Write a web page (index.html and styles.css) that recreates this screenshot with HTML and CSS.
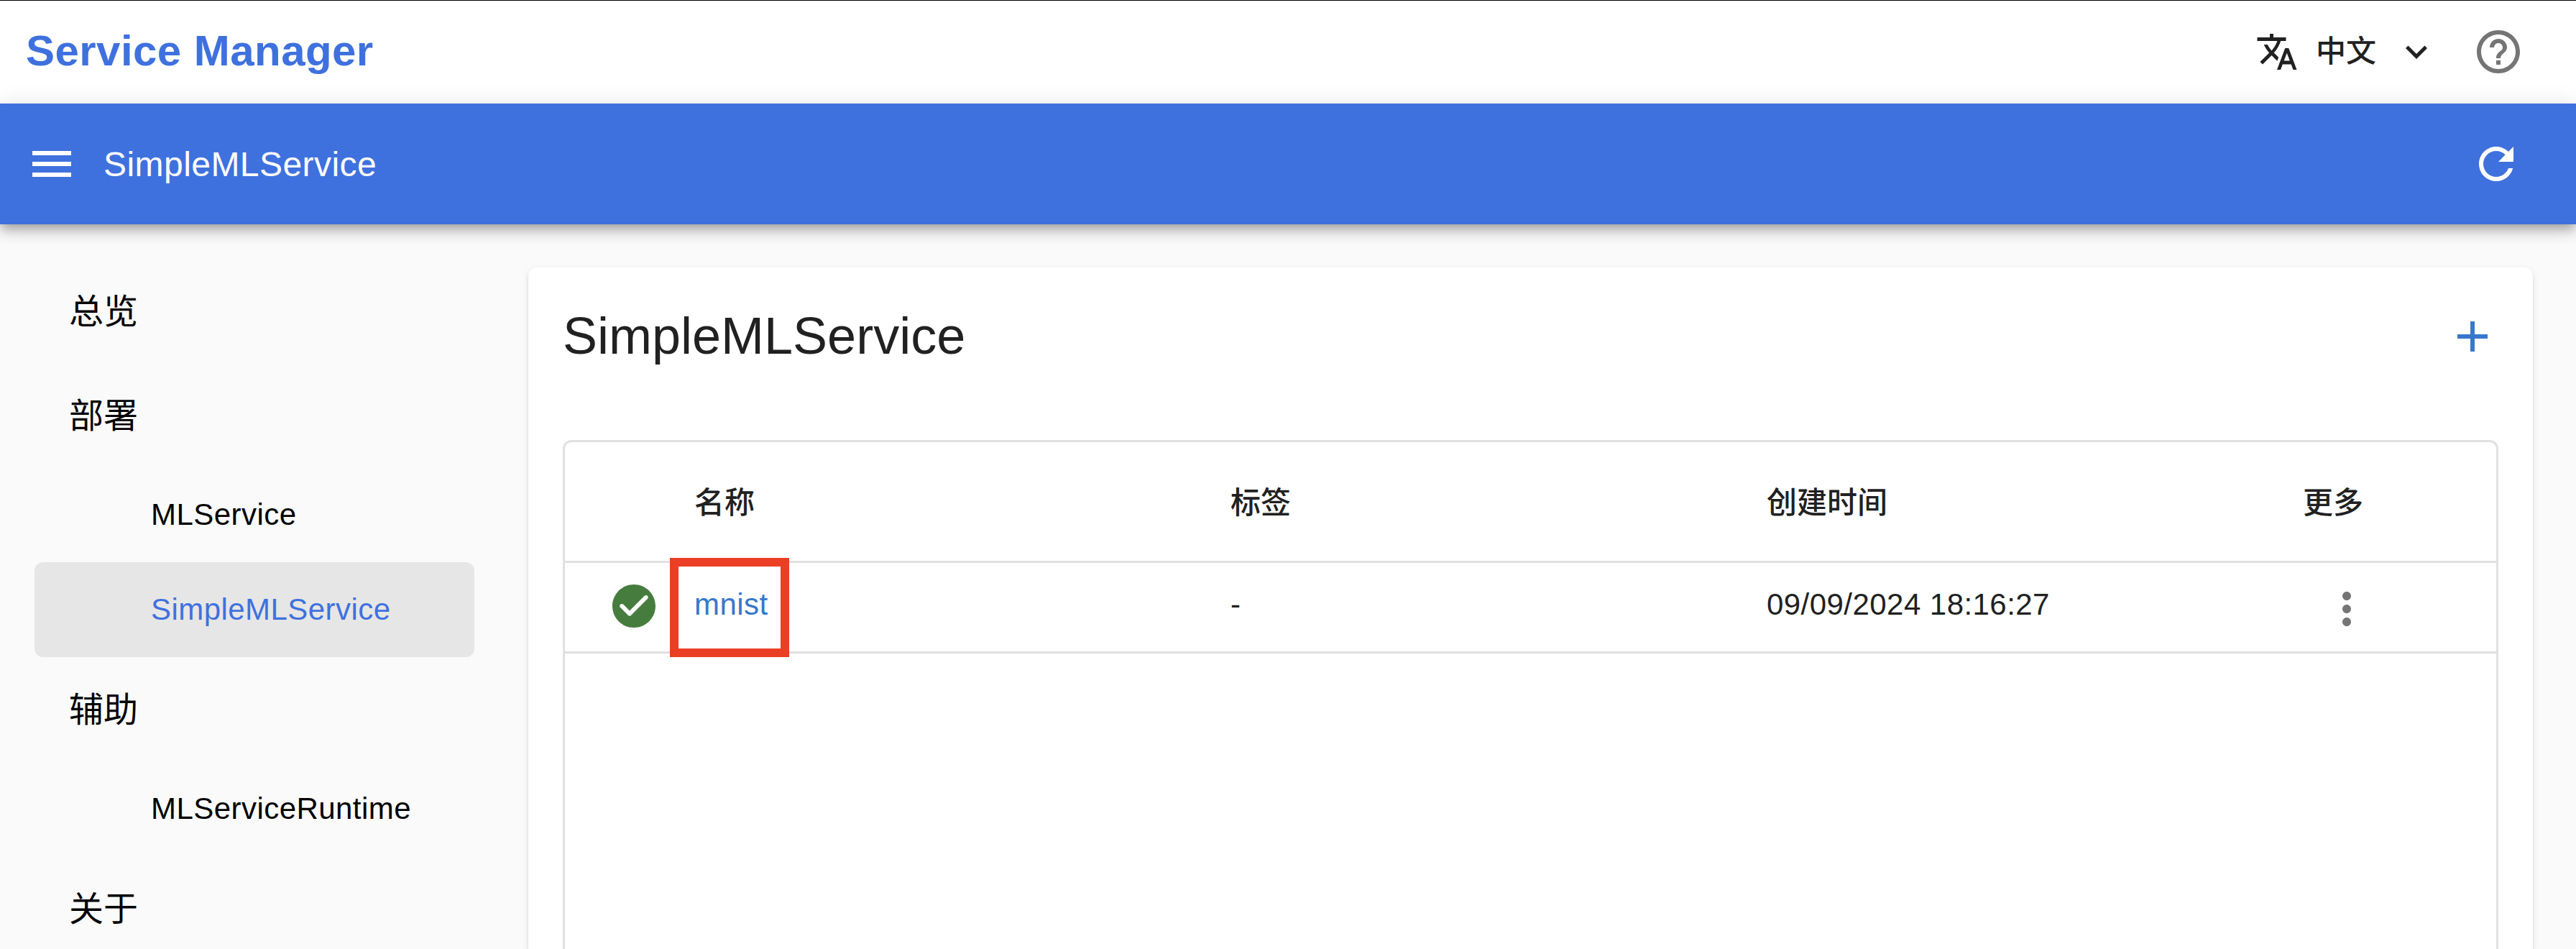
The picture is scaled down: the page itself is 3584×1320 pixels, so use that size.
FILE: index.html
```html
<!DOCTYPE html>
<html lang="zh-CN">
<head>
<meta charset="utf-8">
<title>Service Manager</title>
<link rel="stylesheet" href="styles.css">
</head>
<body>
<header class="topbar">
  <h1 class="brand">Service Manager</h1>
  <div class="topbar-actions">
    <button class="language">
      <svg class="icon-small" viewBox="0 0 24 24"><path d="m12.87 15.07-2.54-2.51.03-.03c1.74-1.94 2.98-4.17 3.71-6.53H17V4h-7V2H8v2H1v1.99h11.17C11.5 7.92 10.44 9.75 9 11.35 8.07 10.32 7.3 9.19 6.69 8h-2c.73 1.63 1.73 3.17 2.98 4.56l-5.09 5.02L4 19l5-5 3.11 3.11.76-2.04zM18.5 10h-2L12 22h2l1.12-3h4.75L21 22h2l-4.5-12zm-2.62 7 1.62-4.33L19.12 17h-3.24z"/></svg>
      <span class="language-name">中文</span>
      <svg class="icon-small" viewBox="0 0 24 24"><path d="M16.59 8.59 12 13.17 7.41 8.59 6 10l6 6 6-6z"/></svg>
    </button>
    <svg class="icon help" viewBox="0 0 24 24"><path d="M11 18h2v-2h-2v2zm1-16C6.48 2 2 6.48 2 12s4.48 10 10 10 10-4.48 10-10S17.52 2 12 2zm0 18c-4.41 0-8-3.59-8-8s3.59-8 8-8 8 3.59 8 8-3.59 8-8 8zm0-14c-2.21 0-4 1.79-4 4h2c0-1.1.9-2 2-2s2 .9 2 2c0 2-3 1.75-3 5h2c0-2.25 3-2.5 3-5 0-2.21-1.79-4-4-4z"/></svg>
  </div>
</header>
<div class="appbar">
  <svg class="icon" viewBox="0 0 24 24"><path d="M3 18h18v-2H3v2zm0-5h18v-2H3v2zm0-7v2h18V6H3z"/></svg>
  <span class="appbar-title">SimpleMLService</span>
  <svg class="icon" viewBox="0 0 24 24"><path d="M17.65 6.35C16.2 4.9 14.21 4 12 4c-4.42 0-7.99 3.58-7.99 8s3.57 8 7.99 8c3.73 0 6.84-2.55 7.73-6h-2.08c-.82 2.33-3.04 4-5.65 4-3.31 0-6-2.69-6-6s2.69-6 6-6c1.66 0 3.14.69 4.22 1.78L13 11h7V4l-2.35 2.35z"/></svg>
</div>
<div class="layout">
  <nav class="sidebar">
    <a class="nav-group">总览</a>
    <a class="nav-group">部署</a>
    <a class="nav-item">MLService</a>
    <a class="nav-item selected">SimpleMLService</a>
    <a class="nav-group">辅助</a>
    <a class="nav-item">MLServiceRuntime</a>
    <a class="nav-group">关于</a>
  </nav>
  <main class="card">
    <div class="card-head">
      <h2 class="card-title">SimpleMLService</h2>
      <svg class="icon add" viewBox="0 0 24 24"><path d="M19 13h-6v6h-2v-6H5v-2h6V5h2v6h6v2z"/></svg>
    </div>
    <div class="table">
      <div class="row head">
        <span></span>
        <span>名称</span>
        <span>标签</span>
        <span>创建时间</span>
        <span>更多</span>
      </div>
      <div class="row">
        <svg class="icon status" viewBox="0 0 24 24"><path d="M12 2C6.48 2 2 6.48 2 12s4.48 10 10 10 10-4.48 10-10S17.52 2 12 2zM9.29 16.29 5.7 12.7a.9959.9959 0 0 1 0-1.41c.39-.39 1.02-.39 1.41 0L10 14.17l6.88-6.88c.39-.39 1.02-.39 1.41 0 .39.39.39 1.02 0 1.41l-7.59 7.59c-.38.39-1.02.39-1.41 0z"/></svg>
        <span class="name"><a class="link">mnist</a><i class="highlight"></i></span>
        <span>-</span>
        <span>09/09/2024 18:16:27</span>
        <svg class="icon more" viewBox="0 0 24 24"><path d="M12 8c1.1 0 2-.9 2-2s-.9-2-2-2-2 .9-2 2 .9 2 2 2zm0 2c-1.1 0-2 .9-2 2s.9 2 2 2 2-.9 2-2-.9-2-2-2zm0 6c-1.1 0-2 .9-2 2s.9 2 2 2 2-.9 2-2-.9-2-2-2z"/></svg>
      </div>
    </div>
  </main>
</div>
</body>
</html>
```

FILE: styles.css
```css
* {
  box-sizing: border-box;
}

body {
  display: flex;
  flex-direction: column;
  height: 1320px;
  margin: 0;
  overflow: hidden;
  background: #fafafa;
  color: #212121;
  font-family: "Liberation Sans", "Noto Sans CJK SC", sans-serif;
  font-size: 42px;
  letter-spacing: 0.45px;
}

h1,
h2 {
  margin: 0;
}

.icon,
.icon-small {
  display: block;
  flex: none;
  width: 72px;
  height: 72px;
  fill: currentColor;
}

.icon-small {
  width: 60px;
  height: 60px;
}

.topbar {
  display: flex;
  flex: none;
  align-items: center;
  justify-content: space-between;
  height: 144px;
  padding: 0 72px 0 36px;
  background: #fff;
  box-shadow: inset 0 1px #000;
}

.brand {
  padding-bottom: 2px;
  color: #3f71de;
  font-size: 60px;
  line-height: 72px;
}

.topbar-actions {
  display: flex;
  align-items: center;
}

.language {
  display: flex;
  align-items: center;
  margin: 0 48px 0 0;
  padding: 0;
  border: 0;
  background: none;
  color: #212121;
  font: inherit;
  font-weight: 500;
  letter-spacing: 0;
}

.language-name {
  margin: 0 26px 0 24px;
  line-height: 60px;
}

.help {
  color: #757575;
}

.appbar {
  display: flex;
  z-index: 1;
  flex: none;
  align-items: center;
  height: 168px;
  padding: 0 75px 0 36px;
  background: #3f71de;
  box-shadow: 0 6px 12px -3px rgba(0, 0, 0, 0.2), 0 12px 15px rgba(0, 0, 0, 0.14), 0 3px 30px rgba(0, 0, 0, 0.12);
  color: #fff;
}

.appbar-title {
  flex: 1;
  margin-left: 36px;
  font-size: 48px;
}

.layout {
  display: flex;
  flex: 1;
  gap: 75px;
  min-height: 0;
  padding: 48px 60px 0 48px;
}

.sidebar {
  display: flex;
  flex: none;
  flex-direction: column;
  width: 612px;
  color: #000;
}

.nav-group,
.nav-item {
  display: flex;
  flex: none;
  align-items: center;
  height: 145px;
  padding: 0 0 7px 48px;
  font-size: 48px;
  letter-spacing: 0;
}

.nav-item {
  height: 132px;
  padding: 0 0 0 162px;
  border-radius: 12px;
  font-size: 42px;
  letter-spacing: 0.45px;
}

.selected {
  background: #e6e6e6;
  color: #3f71de;
}

.card {
  display: flex;
  flex: 1;
  flex-direction: column;
  margin-top: 12px;
  padding: 48px 48px 0;
  border-radius: 12px 12px 0 0;
  background: #fff;
  box-shadow: 0 6px 3px -3px rgba(0, 0, 0, 0.1), 0 3px 3px rgba(0, 0, 0, 0.07), 0 3px 9px rgba(0, 0, 0, 0.12);
}

.card-head {
  display: flex;
  flex: none;
  align-items: center;
  justify-content: space-between;
  height: 96px;
}

.card-title {
  padding-bottom: 2px;
  font-size: 72px;
  font-weight: 400;
  letter-spacing: 0;
}

.add,
.link {
  color: #3777cd;
}

.table {
  flex: 1;
  margin-top: 96px;
  border: 3px solid #e0e0e0;
  border-bottom: 0;
  border-radius: 12px 12px 0 0;
}

.row {
  display: grid;
  grid-template-columns: 180px repeat(3, 746px) 1fr;
  align-items: center;
  height: 126px;
  border-bottom: 3px solid #e0e0e0;
  line-height: 60px;
}

.head {
  height: 168px;
  padding-top: 4px;
  font-weight: 500;
  letter-spacing: 0;
}

.row:not(.head) > span {
  margin-bottom: 8px;
}

.status {
  margin: 0 0 3px 60px;
  color: #467d3e;
}

.more {
  margin: 4px 0 0 25px;
  color: #757575;
}

.name {
  position: relative;
}

.highlight {
  position: absolute;
  top: -35px;
  left: -34px;
  width: 166px;
  height: 138px;
  border: 12px solid #ea3f25;
}
```
